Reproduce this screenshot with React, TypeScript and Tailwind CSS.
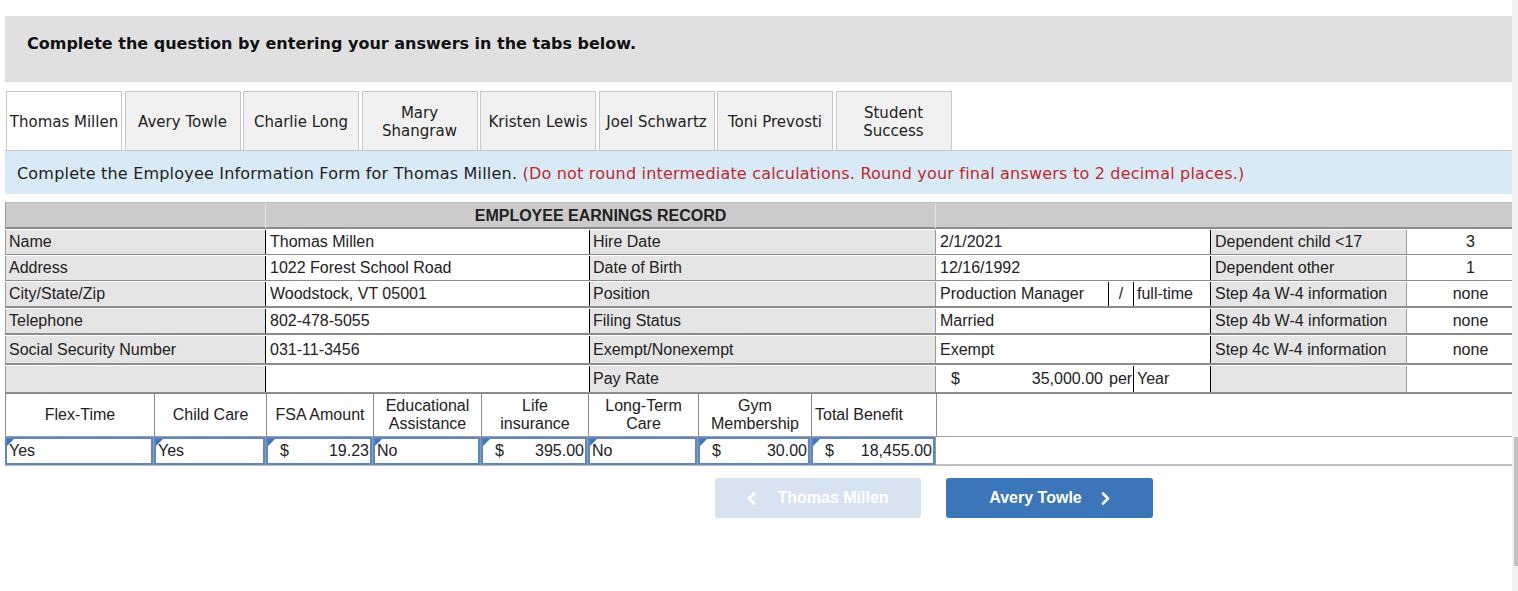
const tabs: string[][] = [
  ["Thomas Millen"],
  ["Avery Towle"],
  ["Charlie Long"],
  ["Mary", "Shangraw"],
  ["Kristen Lewis"],
  ["Joel Schwartz"],
  ["Toni Prevosti"],
  ["Student", "Success"],
];

type InfoRow = {
  a: string;
  b: string;
  c: string;
  d: string | "position" | "pay";
  e: string;
  f: string;
  h: string;
};

const rows: InfoRow[] = [
  { a: "Name", b: "Thomas Millen", c: "Hire Date", d: "2/1/2021", e: "Dependent child <17", f: "3", h: "h-[26px]" },
  { a: "Address", b: "1022 Forest School Road", c: "Date of Birth", d: "12/16/1992", e: "Dependent other", f: "1", h: "h-[26px]" },
  { a: "City/State/Zip", b: "Woodstock, VT 05001", c: "Position", d: "position", e: "Step 4a W-4 information", f: "none", h: "h-[27px]" },
  { a: "Telephone", b: "802-478-5055", c: "Filing Status", d: "Married", e: "Step 4b W-4 information", f: "none", h: "h-[27px]" },
  { a: "Social Security Number", b: "031-11-3456", c: "Exempt/Nonexempt", d: "Exempt", e: "Step 4c W-4 information", f: "none", h: "h-[30px]" },
  { a: "", b: "", c: "Pay Rate", d: "pay", e: "", f: "", h: "h-[29px]" },
];

type Benefit = { head: string[]; value?: string; amount?: string; left?: boolean };

const benefits: Benefit[] = [
  { head: ["Flex-Time"], value: "Yes" },
  { head: ["Child Care"], value: "Yes" },
  { head: ["FSA Amount"], amount: "19.23" },
  { head: ["Educational", "Assistance"], value: "No" },
  { head: ["Life", "insurance"], amount: "395.00" },
  { head: ["Long-Term", "Care"], value: "No" },
  { head: ["Gym", "Membership"], amount: "30.00" },
  { head: ["Total Benefit"], amount: "18,455.00", left: true },
];

function ValueCell({ d }: { d: string }) {
  if (d === "position") {
    return (
      <div className="flex border-r border-black bg-white">
        <div className="flex w-[172px] items-center pl-[4px]">Production Manager</div>
        <div className="flex w-[26px] items-center justify-center border-x border-black">/</div>
        <div className="flex flex-1 items-center pl-[3px]">full-time</div>
      </div>
    );
  }
  if (d === "pay") {
    return (
      <div className="flex border-r border-black bg-white">
        <div className="flex w-[172px] items-center justify-between pl-[15px] pr-[5px]">
          <span>$</span>
          <span>35,000.00</span>
        </div>
        <div className="flex w-[26px] items-center border-r border-black pl-[1px]">per</div>
        <div className="flex flex-1 items-center pl-[3px]">Year</div>
      </div>
    );
  }
  return <div className="flex items-center border-r border-black bg-white pl-[4px]">{d}</div>;
}

function Marker() {
  return (
    <span className="absolute left-0 top-0 h-0 w-0 border-r-[7px] border-t-[7px] border-r-transparent border-t-[#3b76c4]" />
  );
}

function Chevron({ dir }: { dir: "left" | "right" }) {
  return (
    <svg width="9" height="13" viewBox="0 0 9 13" fill="none" stroke="currentColor" strokeWidth="2.6" strokeLinecap="round" strokeLinejoin="round">
      {dir === "left" ? <polyline points="7,1.5 2,6.5 7,11.5" /> : <polyline points="2,1.5 7,6.5 2,11.5" />}
    </svg>
  );
}

export default function App() {
  return (
    <div className="flex h-[591px] overflow-hidden bg-white">
      <div className="w-[1512px] shrink-0 pl-[5px] pt-4">
        {/* Question banner */}
        <div className="h-[66px] bg-[#e0e0e0] pl-[22px] pt-[16px] font-['DejaVu_Sans',Verdana,sans-serif] text-[16px] font-bold text-[#111]">
          Complete the question by entering your answers in the tabs below.
        </div>

        {/* Tabs */}
        <div className="mt-[9px] flex items-end gap-[2.5px] border-b border-[#c8c8c8] pl-[1px] font-['DejaVu_Sans',Verdana,sans-serif] text-[15px] leading-[18px] text-[#222]">
          {tabs.map((t, i) => (
            <div
              key={t.join(" ")}
              className={`flex h-[59px] w-[116px] flex-col items-center justify-center border border-b-0 border-[#c8c8c8] pt-[2px] text-center ${
                i === 0 ? "bg-white" : "bg-[#f1f1f1]"
              }`}
            >
              {t.map((line) => (
                <span key={line}>{line}</span>
              ))}
            </div>
          ))}
        </div>

        {/* Instructions */}
        <div className="flex h-[43px] items-center bg-[#d9eaf7] pl-[12px] pt-[2px] font-['DejaVu_Sans',Verdana,sans-serif] text-[16px] tracking-[0.2px] text-[#222]">
          <span>
            Complete the Employee Information Form for Thomas Millen.{" "}
            <span className="text-[#c1272d]">
              (Do not round intermediate calculations. Round your final answers to 2 decimal places.)
            </span>
          </span>
        </div>

        {/* Earnings record */}
        <div className="mt-2 font-['Liberation_Sans',Arial,sans-serif] text-[16px] text-[#222]">
          <div className="grid h-[27px] grid-cols-[261px_670px_576px] border-b-2 border-t border-b-[#8c8c8c] border-t-[#bdbdbd] bg-[#cbcbcb]">
            <div className="border-l border-r border-l-[#9a9a9a] border-r-[#e6e6e6]" />
            <div className="flex items-center justify-center border-r border-[#e6e6e6] pt-[1px] font-bold">
              EMPLOYEE EARNINGS RECORD
            </div>
            <div />
          </div>

          {rows.map((r, i) => (
            <div
              key={i}
              className={`grid grid-cols-[261px_324px_346px_275px_196px_105px] border-b-2 border-[#8c8c8c] pt-[1px] ${r.h}`}
            >
              <div className="flex items-center border-l border-r border-l-[#9a9a9a] border-r-black bg-[#e5e5e5] pl-[3px]">
                {r.a}
              </div>
              <div className="flex items-center border-r border-black bg-white pl-[4px]">{r.b}</div>
              <div className="flex items-center border-r border-[#9a9a9a] bg-[#e5e5e5] pl-[3px]">{r.c}</div>
              <ValueCell d={r.d} />
              <div className="flex items-center border-r border-[#9a9a9a] bg-[#e5e5e5] pl-[4px]">{r.e}</div>
              <div className="flex items-center justify-center bg-white pl-[22px]">{r.f}</div>
            </div>
          ))}

          {/* Benefits */}
          <div className="grid h-[43px] grid-cols-[149px_112px_107px_108px_107px_110px_113px_125px_1fr] border-b border-[#a0a0a0] leading-[18px]">
            {benefits.map((b) => (
              <div
                key={b.head.join(" ")}
                className={`flex flex-col justify-center border-l border-[#8c8c8c] ${
                  b.left ? "items-start pl-[3px]" : "items-center text-center"
                }`}
              >
                {b.head.map((line) => (
                  <span key={line}>{line}</span>
                ))}
              </div>
            ))}
            <div className="border-l border-[#8c8c8c]" />
          </div>

          <div className="grid h-[29px] grid-cols-[149px_112px_107px_108px_107px_110px_113px_125px_1fr] border-b-2 border-[#c0c0c0]">
            {benefits.map((b) => (
              <div key={b.head.join(" ")} className="border-r border-[#9a9a9a]">
                <div className="relative flex h-full items-center border-2 border-[#5a88c6] bg-white">
                  <Marker />
                  {b.amount ? (
                    <div className="flex w-full justify-between pl-[12px] pr-[1px]">
                      <span>$</span>
                      <span>{b.amount}</span>
                    </div>
                  ) : (
                    <span className="pl-[2px]">{b.value}</span>
                  )}
                </div>
              </div>
            ))}
            <div />
          </div>
        </div>

        {/* Navigation */}
        <div className="mt-[12px] flex gap-[25px] pl-[710px] font-['Liberation_Sans',Arial,sans-serif] text-[16px] font-bold text-white">
          <button className="flex h-[40px] w-[206px] items-center justify-center gap-[21px] rounded-[3px] bg-[#d8e3f1]">
            <Chevron dir="left" />
            <span>Thomas Millen</span>
          </button>
          <button className="flex h-[40px] w-[207px] items-center justify-center gap-[19px] rounded-[3px] bg-[#3b76b9]">
            <span>Avery Towle</span>
            <Chevron dir="right" />
          </button>
        </div>
      </div>

      {/* Scrollbar */}
      <div className="w-[6px] shrink-0 bg-[#f1f1f1] pt-[437px]">
        <div className="ml-[2px] h-[129px] bg-[#c1c1c1]" />
      </div>
    </div>
  );
}
